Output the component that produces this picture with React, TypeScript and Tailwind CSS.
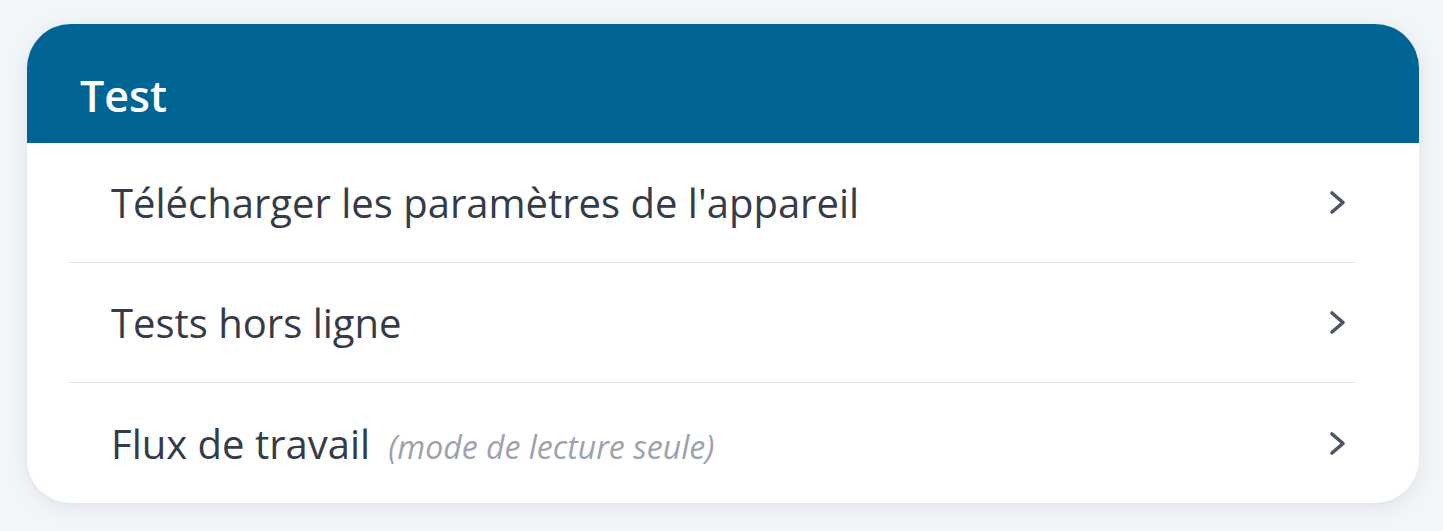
const items: { label: string; note?: string }[] = [
  { label: "Télécharger les paramètres de l'appareil" },
  { label: "Tests hors ligne" },
  { label: "Flux de travail", note: "(mode de lecture seule)" },
];

function Chevron() {
  return (
    <svg width="18" height="25" viewBox="0 0 18 25" fill="none" className="shrink-0">
      <polyline
        points="3,3 14,12.5 3,22"
        stroke="#4b5563"
        strokeWidth="3.6"
        strokeLinecap="round"
        strokeLinejoin="round"
      />
    </svg>
  );
}

export default function App() {
  return (
    <div
      className="min-h-screen bg-[#f3f6f9] pl-[27px] pr-[24px] pt-[24px] pb-[29px]"
      style={{ fontFamily: '"Open Sans", "Noto Sans", sans-serif' }}
    >
      <div className="overflow-hidden rounded-[44px] bg-white shadow-[0_4px_18px_rgba(30,41,59,0.10)]">
        <div className="h-[119px] bg-[#006494] pl-[53px] pt-[42px]">
          <h2 className="text-[43px] font-semibold leading-[normal] text-white">Test</h2>
        </div>
        <ul className="pl-[42px] pr-[64px]">
          {items.map((item, i) => (
            <li
              key={item.label}
              className={
                "flex h-[120px] items-center justify-between pl-[42px] pr-[8px] " +
                (i < items.length - 1 ? "border-b border-[#e3e5e8]" : "")
              }
            >
              <div className="flex items-baseline gap-[18px]">
                <span className="text-[40px] leading-[normal] text-[#353b47]">{item.label}</span>
                {item.note && (
                  <span className="text-[32px] italic leading-[normal] text-[#9ca3af]">{item.note}</span>
                )}
              </div>
              <Chevron />
            </li>
          ))}
        </ul>
      </div>
    </div>
  );
}
